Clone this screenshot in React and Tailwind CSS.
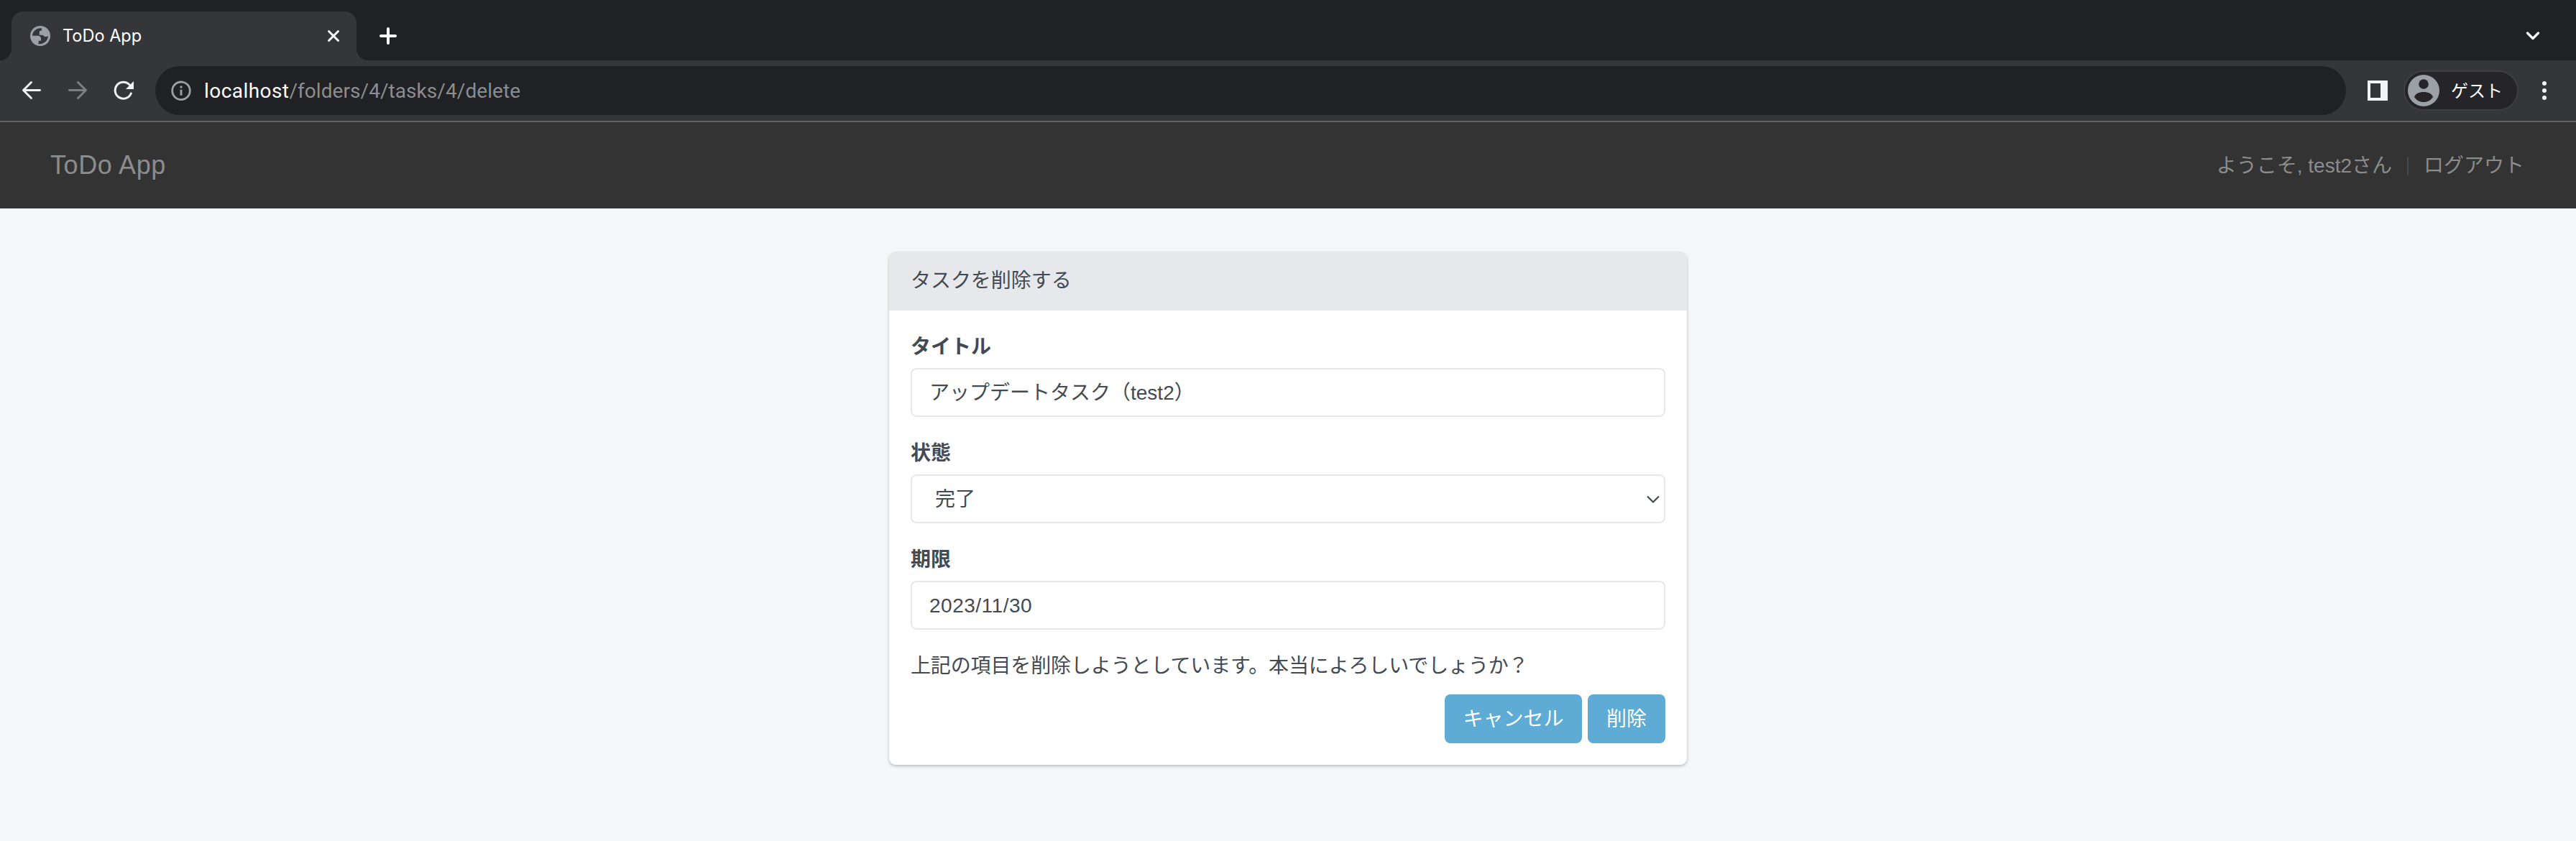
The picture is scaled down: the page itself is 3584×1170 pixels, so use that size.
const JP = "font-['Liberation_Sans','Noto_Sans_CJK_JP',sans-serif]";

function Tab() {
  return (
    <div className="flex h-21 items-end bg-[#202124]">
      <div className="h-4 w-4 bg-[#35363a]">
        <div className="h-4 w-4 rounded-br-[16px] bg-[#202124]" />
      </div>
      <div className="flex h-[68px] w-[480px] items-center rounded-t-[16px] bg-[#35363a] pr-[22px] pl-[26px]">
        <svg className="size-7" viewBox="0 0 28 28">
          <circle cx="14" cy="14" r="14" fill="#9aa0a6" />
          <path d="M16 3.300C9.500 2.300 3.300 7 3 13.700h7.500c2.800 0 4.500 1.500 4.500 4v3h-3.200v1.800c0 1.400-.6 2.300-1.400 2.300C17.500 26.600 24.700 21.500 25 14c-1.600 1.200-3.500 1.500-5 .8-1.400-.6-1.800-2-3.500-2H12.800V8.600c0-1.300.9-2.200 2.300-2.200h.9z" fill="#35363a" />
        </svg>
        <div className="ml-[17px] flex-1 font-[Inter,sans-serif] text-[24px] leading-none text-white">
          <span className="inline-block origin-left scale-x-[0.98]">ToDo App</span>
        </div>
        <svg className="size-5" viewBox="0 0 20 20" stroke="#fff" strokeWidth="3" strokeLinecap="round" fill="none">
          <path d="M3.500 3.500 16.500 16.500M16.500 3.500 3.500 16.500" />
        </svg>
      </div>
      <div className="h-4 w-4 bg-[#35363a]">
        <div className="h-4 w-4 rounded-bl-[16px] bg-[#202124]" />
      </div>
      <div className="flex h-[68px] flex-1 items-center justify-between pr-[50px] pl-4">
        <svg className="size-6" viewBox="0 0 24 24" stroke="#fff" strokeWidth="4" strokeLinecap="round">
          <path d="M12 2v20M2 12h20" />
        </svg>
        <svg className="h-3 w-5" viewBox="0 0 20 12" stroke="#fff" strokeWidth="3.200" fill="none" strokeLinecap="round" strokeLinejoin="round">
          <path d="m2.500 2 7.500 7.500L17.500 2" />
        </svg>
      </div>
    </div>
  );
}

function Toolbar() {
  return (
    <div className="flex h-[86px] items-center border-b-2 border-[#5f6368] bg-[#35363a]">
      <div className="flex w-[216px] items-center gap-9 pl-[30px]">
        <svg className="size-7" viewBox="0 0 28 28" stroke="#f1f3f4" strokeWidth="2.900" strokeLinecap="round" strokeLinejoin="round" fill="none">
          <path d="M25.500 13.500H2.500M13.500 2.500l-11 11 11 11" />
        </svg>
        <svg className="size-7" viewBox="0 0 28 28" stroke="#7f8082" strokeWidth="2.900" strokeLinecap="round" strokeLinejoin="round" fill="none">
          <path d="M2.500 13.500h23M14.500 2.500l11 11-11 11" />
        </svg>
        <svg className="size-7" viewBox="0 0 28 28">
          <path d="M24.300 18A11.500 11.500 0 1 1 22 5.800" stroke="#f1f3f4" strokeWidth="3" strokeLinecap="round" fill="none" />
          <path d="M28 1v11H17z" fill="#f1f3f4" />
        </svg>
      </div>
      <div className="flex h-[68px] w-[3048px] items-center rounded-full bg-[#202124] pl-[22px]">
        <svg className="size-7" viewBox="0 0 28 28" fill="none" stroke="#9aa0a6">
          <circle cx="14" cy="14.300" r="12.300" strokeWidth="2.800" />
          <path d="M14 12.800v8M14 7.600v3" strokeWidth="2.900" />
        </svg>
        <div className="ml-[18px] pt-px font-[Roboto,sans-serif] text-[28px] leading-none tracking-[0.06px] text-[#8b8d90]">
          <span className="tracking-[0.44px] text-white">localhost</span>/folders/4/tasks/4/delete
        </div>
      </div>
      <div className="flex flex-1 items-center pl-[30px]">
        <svg className="size-7" viewBox="0 0 28 28">
          <path fillRule="evenodd" d="M0 0h28v28H0zM4 4v20h14V4z" fill="#f1f3f4" />
        </svg>
        <div className="ml-[22px] flex h-14 w-[160px] items-center rounded-full border-2 border-[#3f3e42] bg-[#242429] pl-1">
          <svg className="size-11" viewBox="0 0 44 44">
            <circle cx="22" cy="22" r="22" fill="#9aa0a6" />
            <circle cx="22" cy="13" r="6.800" fill="#242429" />
            <path d="M9 31c1-4.500 7-7 13-7s12 2.500 13 7c-3 4.500-7.500 7-13 7s-10-2.500-13-7z" fill="#242429" />
          </svg>
          <span className={`ml-4 pt-px text-[24px] leading-none text-white ${JP}`}>ゲスト</span>
        </div>
        <svg className="ml-[33px] h-7 w-[6px]" viewBox="0 0 6 28" fill="#f1f3f4">
          <circle cx="3" cy="4" r="3" />
          <circle cx="3" cy="14" r="3" />
          <circle cx="3" cy="24" r="3" />
        </svg>
      </div>
    </div>
  );
}

function Field({ label, children }) {
  return (
    <div className="mb-[30px]">
      <div className="mb-[9px] h-[41px] pt-px text-[28px] leading-[40px] font-bold">{label}</div>
      <div className="flex h-[68px] items-center rounded-[8px] border-2 border-[#e8e8ec] bg-white px-6 pt-px">{children}</div>
    </div>
  );
}

export default function App() {
  return (
    <div className={`flex h-[1170px] w-[3584px] flex-col overflow-hidden bg-[#f5f7f9] text-[28px] leading-[40px] text-[#434a54] ${JP}`}>
      <Tab />
      <Toolbar />
      <nav className="flex h-[120px] items-center justify-between bg-[#333333] pr-[72px] pl-[70px] text-[#8c8c8c]">
        <span className="text-[36px] tracking-[0.6px]">ToDo App</span>
        <div className="flex items-center pt-px">
          <span>ようこそ, test2さん</span>
          <span className="mx-[21px] h-[26px] w-[2px] bg-[#434a54]" />
          <span>ログアウト</span>
        </div>
      </nav>
      <main className="mx-auto mt-[60px] h-[714px] w-[1110px] shrink-0 overflow-hidden rounded-[9px] bg-white shadow-[0_2px_4px_rgba(0,0,0,0.24)]">
        <div className="h-[82px] bg-[#e7e8ec] px-[30px] pt-[21px] tracking-[-0.05px]">タスクを削除する</div>
        <div className="px-[30px] pt-[30px]">
          <Field label="タイトル">アップデートタスク（test2）</Field>
          <Field label="状態">
            <span className="flex-1 pl-2">完了</span>
            <svg className="-mr-[18px] h-3 w-[18px]" viewBox="0 0 18 12" fill="none" stroke="#434a54" strokeWidth="2.200">
              <path d="m1 1.500 8 8 8-8" />
            </svg>
          </Field>
          <Field label="期限">
            <span className="tracking-[0.5px]">2023/11/30</span>
          </Field>
          <p className="pt-px tracking-[-0.13px]">上記の項目を削除しようとしています。本当によろしいでしょうか？</p>
          <div className="mt-[19px] flex justify-end gap-2 text-white">
            <button className="h-[68px] w-[191px] rounded-[8px] bg-[#5eabd6] pt-px">キャンセル</button>
            <button className="h-[68px] w-[108px] rounded-[8px] bg-[#5eabd6] pt-px">削除</button>
          </div>
        </div>
      </main>
    </div>
  );
}
